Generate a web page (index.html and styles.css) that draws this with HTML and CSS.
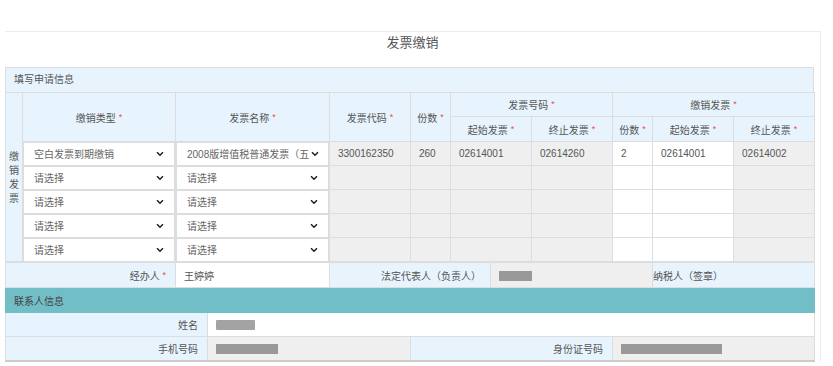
FILE: index.html
```html
<!DOCTYPE html>
<html>
    <head>
        <meta charset="utf-8">
        <title>发票缴销</title>

        <link rel="stylesheet" href="styles.css">
    </head>
    <body>
        <div class="panel">
            <div class="panel-title">发票缴销</div>

            <div class="section-head">填写申请信息</div>

            <table class="apply">
                <colgroup>
                    <col style="width:17px">
                    <col style="width:153px">
                    <col style="width:154px">
                    <col style="width:81px">
                    <col style="width:40px">
                    <col style="width:81px">
                    <col style="width:81px">
                    <col style="width:40px">
                    <col style="width:81px">
                    <col style="width:81px">
                </colgroup>
                <tr class="h1">
                    <td class="side" rowspan="7">缴销发票</td>
                    <th rowspan="2">缴销类型 <i>*</i></th>
                    <th rowspan="2">发票名称 <i>*</i></th>
                    <th rowspan="2">发票代码 <i>*</i></th>
                    <th rowspan="2">份数 <i>*</i></th>
                    <th colspan="2">发票号码 <i>*</i></th>
                    <th colspan="3">缴销发票 <i>*</i></th>
                </tr>
                <tr class="h2">
                    <th>起始发票 <i>*</i></th>
                    <th>终止发票 <i>*</i></th>
                    <th>份数 <i>*</i></th>
                    <th>起始发票 <i>*</i></th>
                    <th>终止发票 <i>*</i></th>
                </tr>
                <tr class="row">
                    <td class="sel"><div class="select"><span>空白发票到期缴销</span><svg width="8" height="6" viewBox="0 0 8 6"><path d="M1 1.2l3 3 3-3"/></svg></div></td>
                    <td class="sel"><div class="select"><span>2008版增值税普通发票（五</span><svg width="8" height="6" viewBox="0 0 8 6"><path d="M1 1.2l3 3 3-3"/></svg></div></td>
                    <td class="ro">3300162350</td>
                    <td class="ro">260</td>
                    <td class="ro">02614001</td>
                    <td class="ro">02614260</td>
                    <td class="in">2</td>
                    <td class="in">02614001</td>
                    <td class="ro">02614002</td>
                </tr>
                <tr class="row">
                    <td class="sel"><div class="select"><span>请选择</span><svg width="8" height="6" viewBox="0 0 8 6"><path d="M1 1.2l3 3 3-3"/></svg></div></td>
                    <td class="sel"><div class="select"><span>请选择</span><svg width="8" height="6" viewBox="0 0 8 6"><path d="M1 1.2l3 3 3-3"/></svg></div></td>
                    <td class="ro"></td>
                    <td class="ro"></td>
                    <td class="ro"></td>
                    <td class="ro"></td>
                    <td class="in"></td>
                    <td class="in"></td>
                    <td class="ro"></td>
                </tr>
                <tr class="row">
                    <td class="sel"><div class="select"><span>请选择</span><svg width="8" height="6" viewBox="0 0 8 6"><path d="M1 1.2l3 3 3-3"/></svg></div></td>
                    <td class="sel"><div class="select"><span>请选择</span><svg width="8" height="6" viewBox="0 0 8 6"><path d="M1 1.2l3 3 3-3"/></svg></div></td>
                    <td class="ro"></td>
                    <td class="ro"></td>
                    <td class="ro"></td>
                    <td class="ro"></td>
                    <td class="in"></td>
                    <td class="in"></td>
                    <td class="ro"></td>
                </tr>
                <tr class="row">
                    <td class="sel"><div class="select"><span>请选择</span><svg width="8" height="6" viewBox="0 0 8 6"><path d="M1 1.2l3 3 3-3"/></svg></div></td>
                    <td class="sel"><div class="select"><span>请选择</span><svg width="8" height="6" viewBox="0 0 8 6"><path d="M1 1.2l3 3 3-3"/></svg></div></td>
                    <td class="ro"></td>
                    <td class="ro"></td>
                    <td class="ro"></td>
                    <td class="ro"></td>
                    <td class="in"></td>
                    <td class="in"></td>
                    <td class="ro"></td>
                </tr>
                <tr class="row">
                    <td class="sel"><div class="select"><span>请选择</span><svg width="8" height="6" viewBox="0 0 8 6"><path d="M1 1.2l3 3 3-3"/></svg></div></td>
                    <td class="sel"><div class="select"><span>请选择</span><svg width="8" height="6" viewBox="0 0 8 6"><path d="M1 1.2l3 3 3-3"/></svg></div></td>
                    <td class="ro"></td>
                    <td class="ro"></td>
                    <td class="ro"></td>
                    <td class="ro"></td>
                    <td class="in"></td>
                    <td class="in"></td>
                    <td class="ro"></td>
                </tr>
            </table>

            <table class="sign">
                <colgroup>
                    <col style="width:170px">
                    <col style="width:154px">
                    <col style="width:161px">
                    <col style="width:162px">
                    <col style="width:162px">
                </colgroup>
                <tr>
                    <td class="label">经办人 <i>*</i></td>
                    <td class="in">王婷婷</td>
                    <td class="label">法定代表人（负责人）</td>
                    <td class="ro"><span class="mask" style="width:33px"></span></td>
                    <td class="label left">纳税人（签章）</td>
                </tr>
            </table>

            <table class="contact">
                <colgroup>
                    <col style="width:202px">
                    <col style="width:203px">
                    <col style="width:202px">
                    <col style="width:202px">
                </colgroup>
                <tr class="bar">
                    <td colspan="4">联系人信息</td>
                </tr>
                <tr class="line">
                    <td class="label">姓名</td>
                    <td class="in" colspan="3"><span class="mask soft" style="width:39px"></span></td>
                </tr>
                <tr class="line">
                    <td class="label">手机号码</td>
                    <td class="ro"><span class="mask" style="width:62px"></span></td>
                    <td class="label">身份证号码</td>
                    <td class="ro"><span class="mask" style="width:101px"></span></td>
                </tr>
            </table>
        </div>
    </body>
</html>
```

FILE: styles.css
```css
body{
    margin: 0;
    background-color: white;
    color: #555;
    font-family: "Liberation Sans", "Noto Sans CJK SC", sans-serif;
    font-size: 10px;
}
.panel{
    margin: 31px 0 0 5px;
    width: 815px;
    border-top: 1px solid #e3eef9;
    border-right: 1px solid #e3eef9;
}
.panel-title{
    height: 35px;
    line-height: 22px;
    text-align: center;
    font-size: 13px;
    color: #555;
}
.section-head{
    box-sizing: border-box;
    width: 809px;
    height: 25px;
    line-height: 24px;
    padding-left: 8px;
    background-color: #e8f4fd;
    border: 1px solid #ddd;
    border-bottom: none;
}
table{
    width: 809px;
    table-layout: fixed;
    border-collapse: collapse;
}
td, th{
    border: 1px solid #ddd;
    padding: 0;
    font-weight: normal;
    white-space: nowrap;
    overflow: hidden;
}
i{
    font-style: normal;
    color: #f0483e;
    font-size: 9px;
    vertical-align: 2px;
}
.apply th{
    background-color: #e8f4fd;
    text-align: center;
}
.apply .h1{
    height: 24px;
}
.apply .h2{
    height: 25px;
}
.apply .row{
    height: 24px;
}
.side{
    background-color: #e8f4fd;
    text-align: center;
    white-space: normal;
    line-height: 14px;
    padding-top: 2px;
}
.sel{
    background-color: #ddd;
}
.select{
    display: flex;
    align-items: center;
    justify-content: space-between;
    box-sizing: border-box;
    height: 22px;
    margin: 0 1px;
    padding: 0 10px 0 10px;
    background-color: white;
    color: #666;
}
.select span{
    white-space: nowrap;
    margin-right: 2px;
}
.select svg{
    flex: none;
}
.select path{
    fill: none;
    stroke: #222;
    stroke-width: 1.6;
}
.ro{
    background-color: #efefef;
    padding-left: 8px;
}
.in{
    background-color: white;
    padding-left: 8px;
}
.sign tr{
    height: 25px;
}
.label{
    background-color: #e8f4fd;
    text-align: right;
    padding-right: 9px;
}
.label.left{
    text-align: left;
    padding: 0;
}
.mask{
    display: inline-block;
    height: 10px;
    vertical-align: middle;
    background-color: #999;
}
.mask.soft{
    background-color: #a3a3a3;
    border-radius: 1px;
}
.contact .bar td{
    height: 23px;
    background-color: #72bec6;
    color: #444;
    padding-left: 8px;
    border-color: #72bec6;
}
.contact .line{
    height: 24px;
}
.contact{
    border-bottom: 2px solid #ccc;
}
```
